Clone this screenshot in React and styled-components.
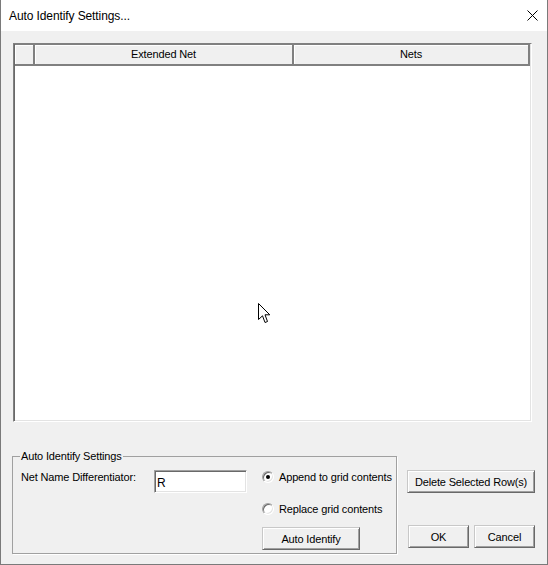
import React from "react";
import styled, { createGlobalStyle } from "styled-components";

const GlobalStyle = createGlobalStyle`
  html, body {
    margin: 0;
    padding: 0;
    background: #f0f0f0;
  }
  body {
    font-family: "Liberation Sans", Arial, sans-serif;
    font-size: 11px;
    letter-spacing: -0.15px;
    color: #000;
  }
`;

const Window = styled.div`
  width: 548px;
  height: 565px;
  box-sizing: border-box;
  border-left: 1px solid #7a7a7a;
  border-right: 1px solid #7a7a7a;
  border-bottom: 1px solid #7a7a7a;
  display: flex;
  flex-direction: column;
  background: #f0f0f0;
`;

const TitleBar = styled.div`
  height: 31px;
  flex-shrink: 0;
  background: #fff;
  display: flex;
  align-items: center;
  justify-content: space-between;
  padding: 0 9px 0 8px;
  font-size: 12px;
  letter-spacing: -0.1px;
`;

const CloseBox = styled.div`
  width: 12px;
  height: 12px;
  display: flex;
  align-items: center;
  justify-content: center;
`;

const Client = styled.div`
  flex: 1;
  display: flex;
  flex-direction: column;
  padding: 12px 15px 10px 12px;
  min-height: 0;
`;

const Grid = styled.div`
  position: relative;
  flex: 1;
  display: flex;
  flex-direction: column;
  background: #fff;
  border-style: solid;
  border-width: 1px;
  border-color: #808080 #ffffff #ffffff #808080;
  box-shadow: inset 1px 0 0 #696969, inset -1px -1px 0 #e3e3e3;
  padding: 0 1px 1px 1px;
`;

const HeaderRow = styled.div`
  display: flex;
  height: 21px;
  flex-shrink: 0;
  border-top: 1px solid #808080;
`;

const HeaderCell = styled.div`
  box-sizing: border-box;
  width: ${({ $w }) => $w}px;
  flex: ${({ $grow }) => ($grow ? 1 : "none")};
  background: #f0f0f0;
  border-right: 2px solid #808080;
  border-bottom: 2px solid #808080;
  box-shadow: inset 1px 1px 0 #fff;
  display: flex;
  align-items: center;
  justify-content: center;
  line-height: 1;
`;

const GridBody = styled.div`
  flex: 1;
  background: #fff;
`;

const Cursor = styled.svg`
  position: absolute;
  left: 244px;
  top: 259px;
`;

const BottomRow = styled.div`
  display: flex;
  align-items: flex-start;
  margin-top: 28px;
  margin-left: -1px;
  flex-shrink: 0;
`;

const GroupBox = styled.fieldset`
  box-sizing: border-box;
  width: 385px;
  height: 104px;
  flex-shrink: 0;
  margin: 0;
  padding: 7px 0 0 8px;
  border: 1px solid #a0a0a0;
  box-shadow: 1px 1px 0 #fff;
  display: flex;
  align-items: flex-start;
`;

const Legend = styled.legend`
  padding: 0 1px;
  margin-left: -1px;
  line-height: 13px;
  font-size: 11px;
`;

const FieldLabel = styled.div`
  width: 133px;
  line-height: 14px;
`;

const TextInput = styled.input`
  box-sizing: border-box;
  width: 93px;
  height: 23px;
  margin: 0;
  padding: 2px 2px 0 2px;
  font-family: "Liberation Sans", Arial, sans-serif;
  font-size: 12px;
  color: #000;
  background: #fff;
  border-style: solid;
  border-width: 1px;
  border-color: #a0a0a0 #ffffff #ffffff #a0a0a0;
  box-shadow: inset 1px 1px 0 #696969, inset -1px -1px 0 #e3e3e3;
  outline: none;
`;

const OptionsColumn = styled.div`
  margin-left: 15px;
  display: flex;
  flex-direction: column;
  align-items: flex-start;
`;

const RadioRow = styled.label`
  display: flex;
  align-items: center;
  height: 14px;
  margin-bottom: ${({ $gap }) => $gap || 0}px;
  white-space: nowrap;
`;

const RadioCircle = styled.span`
  box-sizing: border-box;
  width: 12px;
  height: 12px;
  border-radius: 50%;
  background: #fff;
  border: 1px solid;
  border-color: #a0a0a0 #ffffff #ffffff #a0a0a0;
  box-shadow: inset 1px 1px 0 #696969, inset -1px -1px 0 #e3e3e3;
  display: flex;
  align-items: center;
  justify-content: center;
  margin-right: 5px;
  flex-shrink: 0;

  &::after {
    content: "";
    width: 4px;
    height: 4px;
    border-radius: 50%;
    background: ${({ $checked }) => ($checked ? "#000" : "transparent")};
  }
`;

const Button = styled.button`
  box-sizing: border-box;
  width: ${({ $w }) => $w}px;
  height: 23px;
  flex-shrink: 0;
  margin: 0;
  padding: 0;
  font-family: "Liberation Sans", Arial, sans-serif;
  font-size: 11px;
  letter-spacing: -0.15px;
  color: #000;
  background: #f0f0f0;
  border-style: solid;
  border-width: 1px;
  border-color: #c8c8c8 #696969 #696969 #c8c8c8;
  box-shadow: inset 1px 1px 0 #fff, inset -1px -1px 0 #a0a0a0;
  white-space: nowrap;
`;

const ActionColumn = styled.div`
  margin-left: 10px;
  padding-top: 20px;
  width: 128px;
  flex-shrink: 0;
  display: flex;
  flex-direction: column;
`;

const ButtonPair = styled.div`
  display: flex;
  gap: 5px;
  margin-top: 32px;
  margin-left: 1px;
`;

export default function App() {
  return (
    <>
      <GlobalStyle />
      <Window>
        <TitleBar>
          <span>Auto Identify Settings...</span>
          <CloseBox>
            <svg width="11" height="11" viewBox="0 0 11 11">
              <path d="M0.5 0.5 L10.5 10.5 M10.5 0.5 L0.5 10.5" stroke="#000" strokeWidth="1" />
            </svg>
          </CloseBox>
        </TitleBar>
        <Client>
          <Grid>
            <HeaderRow>
              <HeaderCell $w={20}></HeaderCell>
              <HeaderCell $w={259}>Extended Net</HeaderCell>
              <HeaderCell $grow>Nets</HeaderCell>
            </HeaderRow>
            <GridBody />
            <Cursor width="13" height="21" viewBox="0 0 13 21">
              <path
                d="M0.5 0.5 L0.5 16.5 L4.5 12.8 L7 19.5 L9.5 18.5 L7 11.8 L11.8 11.8 Z"
                fill="#fff"
                stroke="#000"
                strokeWidth="1"
                strokeLinejoin="miter"
              />
            </Cursor>
          </Grid>
          <BottomRow>
            <GroupBox>
              <Legend>Auto Identify Settings</Legend>
              <FieldLabel>Net Name Differentiator:</FieldLabel>
              <TextInput defaultValue="R" />
              <OptionsColumn>
                <RadioRow $gap={18}>
                  <RadioCircle $checked />
                  Append to grid contents
                </RadioRow>
                <RadioRow $gap={11}>
                  <RadioCircle />
                  Replace grid contents
                </RadioRow>
                <Button $w={98}>Auto Identify</Button>
              </OptionsColumn>
            </GroupBox>
            <ActionColumn>
              <Button $w={128}>Delete Selected Row(s)</Button>
              <ButtonPair>
                <Button $w={61}>OK</Button>
                <Button $w={61}>Cancel</Button>
              </ButtonPair>
            </ActionColumn>
          </BottomRow>
        </Client>
      </Window>
    </>
  );
}
